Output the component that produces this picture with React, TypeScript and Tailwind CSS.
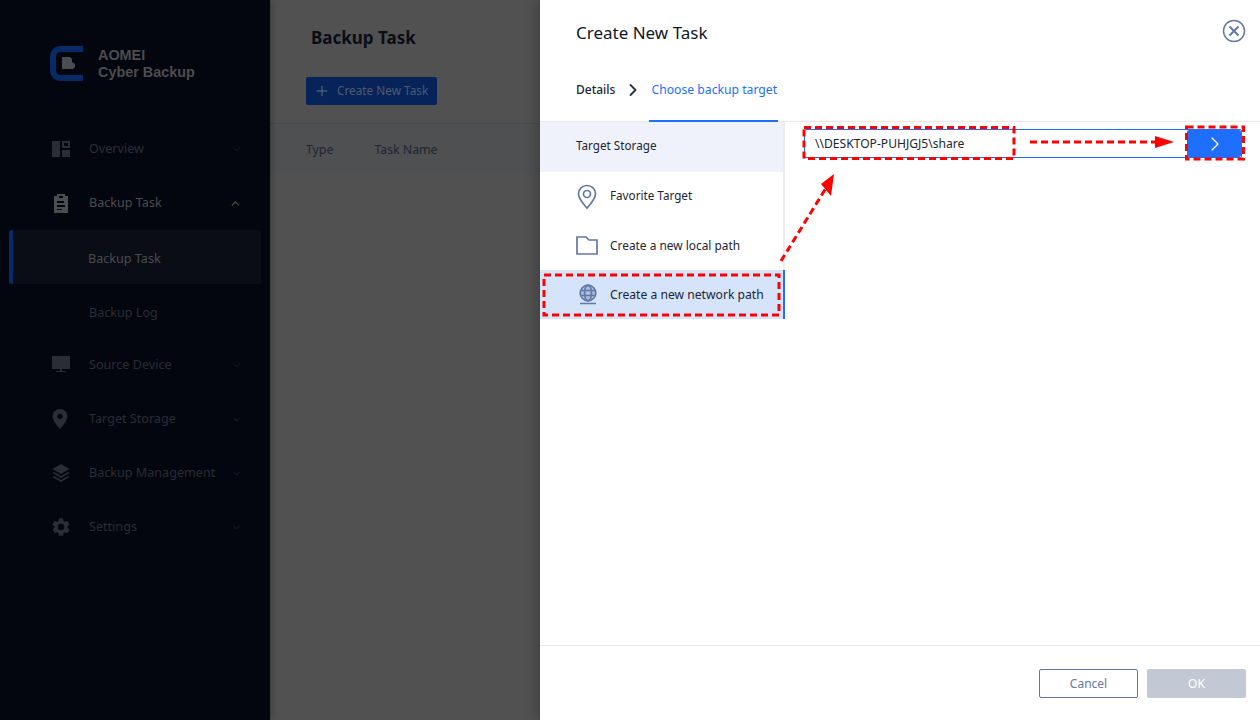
import { ReactNode } from "react";
import { ChevronDown, ChevronRight, ChevronUp, Plus } from "lucide-react";

const font = "font-['Noto_Sans','Open_Sans',sans-serif]";

function DashIcon() {
  return (
    <svg width="18" height="17" viewBox="0 0 18 17" fill="#2a2d35">
      <rect x="0" y="0" width="8" height="16" />
      <path d="M10 0h8v7h-8zM12 2v3h4V2z" fillRule="evenodd" />
      <rect x="10" y="9" width="8" height="7" />
    </svg>
  );
}

function ClipboardIcon() {
  return (
    <svg width="18" height="19" viewBox="0 0 18 19" fill="#4c4d50">
      <path
        fillRule="evenodd"
        d="M2 2h3V0h8v2h3v17H2zM5 7v2h7V7zM5 11v2h8v-2zM5 15v1h5v-1zM7 2v2h4V2z"
      />
    </svg>
  );
}

function MonitorIcon() {
  return (
    <svg width="18" height="18" viewBox="0 0 18 18" fill="#2a2d35">
      <path d="M0 0h18v13H0zM8 13h2v2h4v1H4v-1h4z" />
    </svg>
  );
}

function PinIcon() {
  return (
    <svg width="16" height="20" viewBox="2 0 14 19" fill="#2a2d35">
      <path
        fillRule="evenodd"
        d="M9 0c4 0 7 3 7 7 0 4-4 9-7 12C6 16 2 11 2 7c0-4 3-7 7-7zm0 4.500a2.500 2.500 0 1 0 0 5 2.500 2.500 0 0 0 0-5z"
      />
    </svg>
  );
}

function LayersIcon() {
  return (
    <svg width="18" height="18" viewBox="0 0 18 18" fill="#2a2d35">
      <path d="M9 0l8.500 5L9 10 .5 5z" />
      <path d="M2 8l7 4 7-4 1.500 1L9 14 .5 9z" />
      <path d="M2 12l7 4 7-4 1.500 1L9 18 .5 13z" />
    </svg>
  );
}

function GearIcon() {
  return (
    <svg width="18" height="18" viewBox="2.500 2 19 20" fill="#2a2d35">
      <path d="M19.140 12.940c.04-.3.060-.61.060-.94 0-.32-.020-.64-.070-.94l2.030-1.580a.49.49 0 0 0 .12-.61l-1.920-3.320a.49.49 0 0 0-.59-.22l-2.390.96c-.5-.38-1.030-.7-1.620-.94l-.36-2.540a.48.48 0 0 0-.48-.41h-3.840a.47.47 0 0 0-.47.41l-.36 2.540c-.59.24-1.130.57-1.620.94l-2.390-.96a.49.49 0 0 0-.59.22L2.740 8.870c-.12.21-.080.47.120.61l2.030 1.580c-.05.3-.090.63-.090.94s.020.640.070.940l-2.030 1.580a.49.49 0 0 0-.12.610l1.920 3.320c.12.22.370.290.590.220l2.390-.96c.5.380 1.030.7 1.620.94l.36 2.540c.05.240.240.410.480.410h3.840c.24 0 .440-.170.470-.410l.36-2.540c.59-.24 1.130-.56 1.620-.94l2.390.96c.220.080.470 0 .590-.220l1.920-3.320c.12-.22.070-.470-.120-.610l-2.010-1.580zM12 15.600A3.600 3.600 0 1 1 12 8.400a3.600 3.600 0 0 1 0 7.200z" />
    </svg>
  );
}

function NavItem({ icon, label, bright, open }: { icon: ReactNode; label: string; bright?: boolean; open?: boolean }) {
  return (
    <div className="flex h-[54px] items-center pl-[52px] pr-[28px]">
      <div className="flex w-[37px] shrink-0 items-center">{icon}</div>
      <span className={`flex-1 text-[12.6px] ${bright ? "text-[#4b4c4f]" : "text-[#2a2d35]"}`}>{label}</span>
      {open ? (
        <ChevronUp size={13} strokeWidth={2.5} className="text-[#4b4c4f]" />
      ) : (
        <ChevronDown size={11} className="text-[#1f222a]" />
      )}
    </div>
  );
}

function TargetRow({ icon, label, active, size }: { icon: ReactNode; label: string; active?: boolean; size: string }) {
  return (
    <div
      className={`flex h-[49px] items-center border-r-2 pl-[36px] ${
        active ? "border-[#1f6fff] bg-[#d5e4fb]" : "border-[#ececec]"
      }`}
    >
      <div className="flex w-[34px] shrink-0 items-center">{icon}</div>
      <span className={`text-[#1c2536] ${size}`}>{label}</span>
    </div>
  );
}

export default function App() {
  return (
    <div className={`relative flex h-[720px] w-[1260px] overflow-hidden ${font}`}>
      {/* sidebar */}
      <aside className="relative z-10 flex w-[270px] shrink-0 flex-col bg-[#03060f] shadow-[2px_0_6px_rgba(0,0,0,0.25)]">
        <div className="flex h-[122px] items-start pl-[50px] pt-[46px]">
          <svg width="34" height="35" viewBox="0 0 34 35" className="mr-[14px]">
            <path d="M33 3H11C6 3 3 6 3 11v13c0 5 3 8 8 8h22" fill="none" stroke="#082a66" strokeWidth="6" />
            <path d="M12 11h8l2 2v3l3 2v3l-2 2H12z" fill="#4c4d50" />
          </svg>
          <div className="pt-px font-['Liberation_Sans',sans-serif] text-[14.4px] leading-[17px] font-bold text-[#4c4d50]">
            AOMEI
            <br />
            Cyber Backup
          </div>
        </div>
        <NavItem icon={<DashIcon />} label="Overview" />
        <NavItem icon={<ClipboardIcon />} label="Backup Task" bright open />
        <div className="mx-[9px] flex h-[54px] items-center rounded-[3px] border-l-[4px] border-[#082a66] bg-[#0a0d16] pl-[75px] pt-[4px] text-[12.6px] text-[#4b4c4f]">
          Backup Task
        </div>
        <div className="flex h-[54px] items-center pl-[89px] pt-[4px] text-[12.6px] text-[#2a2d35]">Backup Log</div>
        <NavItem icon={<MonitorIcon />} label="Source Device" />
        <NavItem icon={<PinIcon />} label="Target Storage" />
        <NavItem icon={<LayersIcon />} label="Backup Management" />
        <NavItem icon={<GearIcon />} label="Settings" />
      </aside>

      {/* dimmed page */}
      <main className="flex w-[270px] shrink-0 flex-col bg-[#515151]">
        <h1 className="pl-[41px] pt-[25px] text-[17px] leading-[26px] font-bold text-[#0a0d16]">Backup Task</h1>
        <div className="mt-[26px] ml-[36px] flex h-[28px] w-[131px] items-center rounded-[2px] bg-[#06245a] pl-[8px] text-[11.8px] text-[#4f5a70]">
          <Plus size={16} className="mr-[7px]" />
          Create New Task
        </div>
        <div className="mt-[18px] flex h-[51px] items-center gap-[41px] border-t border-[#4a4a4b] bg-[#4f5052] pl-[36px] pt-[2px] text-[12.3px] text-[#22262f]">
          <span>Type</span>
          <span>Task Name</span>
        </div>
      </main>

      {/* drawer */}
      <section className="relative z-10 flex w-[720px] shrink-0 flex-col bg-white shadow-[-4px_0_10px_rgba(0,0,0,0.2)]">
        <header className="flex h-[66px] items-center justify-between pl-[36px] pr-[14px]">
          <h2 className="text-[17px] text-[#101828]">Create New Task</h2>
          <svg width="24" height="24" viewBox="0 0 24 24" fill="none" stroke="#6478a5" strokeWidth="1.500" className="-mt-[4px]">
            <circle cx="12" cy="12" r="10.500" />
            <path d="M7.500 7.500l9 9M16.500 7.500l-9 9" strokeWidth="2" />
          </svg>
        </header>
        <div className="flex h-[56px] items-stretch border-b border-[#e8e8e8] pl-[36px]">
          <span className="flex items-center pb-[8px] text-[12px] font-medium text-[#1c2536]">Details</span>
          <div className="ml-[8px] mr-[6px] flex items-center pb-[8px]">
            <ChevronRight size={20} strokeWidth={2.2} className="text-[#2a3244]" />
          </div>
          <span className="-mb-px flex w-[129px] items-center border-b-2 border-[#1f6fff] pb-[6px] pl-[2px] text-[12.2px] whitespace-nowrap text-[#1f6fff]">
            Choose backup target
          </span>
        </div>
        <div className="flex flex-1">
          <div className="w-[245px] shrink-0">
            <div className="flex h-[50px] items-center border-r-2 border-[#ececec] bg-[#eff2fa] pb-[2px] pl-[36px] text-[11.7px] text-[#1c2536]">
              Target Storage
            </div>
            <TargetRow
              size="text-[11.7px] pb-[2px]"
              label="Favorite Target"
              icon={
                <svg width="22" height="26" viewBox="0 0 22 26" fill="none" stroke="#6478a5" strokeWidth="1.700">
                  <path d="M11 1.500c4.800 0 8.500 3.700 8.500 8.200 0 5-4.500 10-8.500 14.500C7 19.700 2.500 14.700 2.500 9.700 2.500 5.200 6.200 1.500 11 1.500z" />
                  <circle cx="11" cy="10" r="3.500" />
                </svg>
              }
            />
            <TargetRow
              size="text-[11.9px]"
              label="Create a new local path"
              icon={
                <svg width="22" height="19" viewBox="0 0 22 19" fill="none" stroke="#6478a5" strokeWidth="1.700">
                  <path d="M1 1h9l3 3h8v14H1z" />
                </svg>
              }
            />
            <TargetRow
              active
              size="text-[12.15px] pt-[2px]"
              label="Create a new network path"
              icon={
                <svg width="20" height="21" viewBox="0 0 20 21" fill="none" stroke="#6478a5" strokeWidth="1.700" className="ml-[2px]">
                  <circle cx="10" cy="9" r="7.800" fill="#6478a5" fillOpacity=".35" />
                  <ellipse cx="10" cy="9" rx="3.500" ry="7.800" />
                  <path d="M2.500 6.500h15M2.500 11.500h15M2 19.500h16" />
                </svg>
              }
            />
          </div>
          <div className="flex-1 pl-[19px] pr-[18px] pt-[7px]">
            <div className="flex h-[29px] items-stretch rounded-[2px] border border-[#1f6fff]">
              <span className="flex flex-1 items-center pl-[10px] pt-[2px] text-[12.1px] text-[#1c2536]">\\DESKTOP-PUHJGJ5\share</span>
              <div className="flex w-[54px] items-center justify-center rounded-[2px] bg-[#1f6fff] pl-[2px]">
                <ChevronRight size={24} strokeWidth={1.3} className="text-white" />
              </div>
            </div>
          </div>
        </div>
        <footer className="flex h-[75px] items-center justify-end gap-[9px] border-t border-[#e8e8e8] pr-[14px]">
          <div className="flex h-[29px] w-[99px] items-center justify-center rounded-[2px] border border-[#6478a5] pt-px text-[12px] text-[#6478a5]">
            Cancel
          </div>
          <div className="flex h-[29px] w-[99px] items-center justify-center rounded-[2px] bg-[#c3c9d4] pt-px text-[12px] text-white">
            OK
          </div>
        </footer>
      </section>

      {/* red annotations over the screenshot */}
      <svg className="absolute inset-0 z-20" width="1260" height="720" fill="none" stroke="#f00" strokeWidth="3" strokeDasharray="7 4">
        <rect x="544" y="275" width="235" height="40" />
        <rect x="804" y="127.500" width="210" height="31" />
        <rect x="1186.500" y="127" width="57" height="32" />
        <path d="M781 261L826 188" />
        <path d="M1030 142h136" />
        <path d="M821 184l13-10-3 22z" fill="#f00" stroke="none" />
        <path d="M1155 136l19 6-19 6z" fill="#f00" stroke="none" />
      </svg>
    </div>
  );
}
